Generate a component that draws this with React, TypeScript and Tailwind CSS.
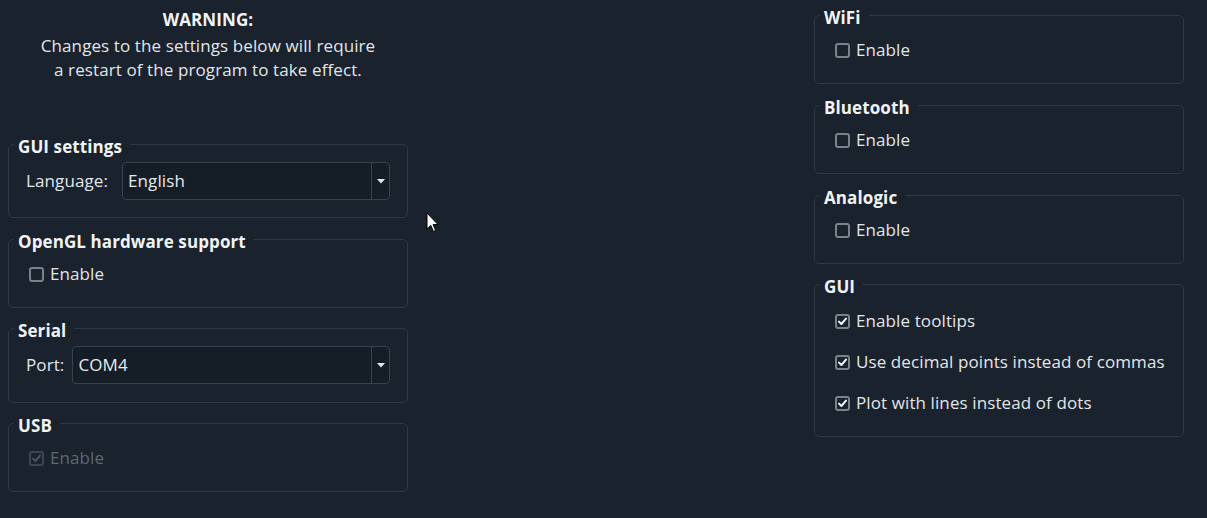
import React from "react";

const FONT = { fontFamily: '"Open Sans", "Noto Sans", sans-serif' };

function CheckBox({ checked, disabled }: { checked?: boolean; disabled?: boolean }) {
  return (
    <span
      className={
        "flex h-[15px] w-[15px] shrink-0 items-center justify-center rounded-[3px] border-2 " +
        (disabled ? "border-[#3d4651]" : "border-[#7a828b]")
      }
    >
      {checked && (
        <svg width="11" height="11" viewBox="0 0 11 11">
          <path
            d="M2 5.6 L4.4 8 L9 2.6"
            fill="none"
            stroke={disabled ? "#4b5560" : "#f4f6f8"}
            strokeWidth="2"
            strokeLinecap="round"
            strokeLinejoin="round"
          />
        </svg>
      )}
    </span>
  );
}

function CheckRow({ label, checked, disabled }: { label: string; checked?: boolean; disabled?: boolean }) {
  return (
    <div className="flex h-6 items-center gap-[6px] pl-[12px]">
      <CheckBox checked={checked} disabled={disabled} />
      <span className={disabled ? "text-[#5e6873]" : "text-[#e3e6ea]"}>{label}</span>
    </div>
  );
}

function Combo({ value }: { value: string }) {
  return (
    <div className="flex h-[38px] flex-1 items-stretch rounded-[4px] border border-[#35424f] bg-[#151d27]">
      <div className="flex flex-1 items-center pl-[5px] text-[#e8ebee]">{value}</div>
      <div className="flex w-[18px] items-center justify-center border-l border-[#35424f]">
        <svg width="8" height="5" viewBox="0 0 8 5">
          <path d="M0 0 L8 0 L4 4.5 Z" fill="#e6e9ec" />
        </svg>
      </div>
    </div>
  );
}

function Group({
  title,
  children,
  className,
  bodyClass,
}: {
  title: string;
  children: React.ReactNode;
  className?: string;
  bodyClass: string;
}) {
  return (
    <fieldset className={"m-0 rounded-[5px] border border-[#2c3947] p-0 " + (className ?? "")}>
      <legend className="ml-[5px] pl-[4px] pr-[8px] pt-[5px] text-[17px] font-bold leading-5 tracking-[0.1px] text-[#f1f3f5]">
        {title}
      </legend>
      <div className={bodyClass}>{children}</div>
    </fieldset>
  );
}

export default function App() {
  return (
    <div
      className="relative flex h-[518px] w-[1207px] overflow-hidden bg-[#19222d] text-[17px] tracking-[0.1px] text-[#e3e6ea]"
      style={FONT}
    >
      {/* Left column */}
      <div className="ml-[8px] flex w-[400px] flex-col">
        <div className="pt-[8px] text-center">
          <div className="font-bold leading-6 text-[#f1f3f5]">WARNING:</div>
          <div className="mt-[2px] leading-6">
            Changes to the settings below will require
            <br />a restart of the program to take effect.
          </div>
        </div>

        <div className="mt-[50px] flex flex-col gap-[8px]">
          <Group title="GUI settings" bodyClass="flex items-center gap-[14px] px-[17px] pb-[17px] pt-[5px]">
            <span>Language:</span>
            <Combo value="English" />
          </Group>
          <Group title="OpenGL hardware support" className="mt-[1px]" bodyClass="pb-[21px] pl-[8px] pt-[10px]">
            <CheckRow label="Enable" />
          </Group>
          <Group title="Serial" bodyClass="flex items-center gap-[8px] px-[17px] pb-[18px] pt-[5px]">
            <span>Port:</span>
            <Combo value="COM4" />
          </Group>
          <Group title="USB" bodyClass="pb-[21px] pl-[8px] pt-[10px]">
            <CheckRow label="Enable" checked disabled />
          </Group>
        </div>
      </div>

      {/* Right column */}
      <div className="ml-[406px] flex w-[370px] flex-col gap-[9px] pt-[3px]">
        <Group title="WiFi" bodyClass="pb-[21px] pl-[8px] pt-[10px]">
          <CheckRow label="Enable" />
        </Group>
        <Group title="Bluetooth" bodyClass="pb-[21px] pl-[8px] pt-[10px]">
          <CheckRow label="Enable" />
        </Group>
        <Group title="Analogic" bodyClass="pb-[21px] pl-[8px] pt-[10px]">
          <CheckRow label="Enable" />
        </Group>
        <Group title="GUI" className="-mt-[1px]" bodyClass="flex flex-col gap-[17px] pb-[21px] pl-[8px] pt-[12px]">
          <CheckRow label="Enable tooltips" checked />
          <CheckRow label="Use decimal points instead of commas" checked />
          <CheckRow label="Plot with lines instead of dots" checked />
        </Group>
      </div>

      {/* Mouse cursor */}
      <svg className="absolute left-[426px] top-[212px]" width="13" height="21" viewBox="0 0 13 21">
        <path
          d="M1 1 L1 17 L4.8 13.4 L7.4 19.4 L9.6 18.4 L7.1 12.6 L12 12.6 Z"
          fill="#ffffff"
          stroke="#000000"
          strokeWidth="1"
          strokeLinejoin="miter"
        />
      </svg>
    </div>
  );
}
